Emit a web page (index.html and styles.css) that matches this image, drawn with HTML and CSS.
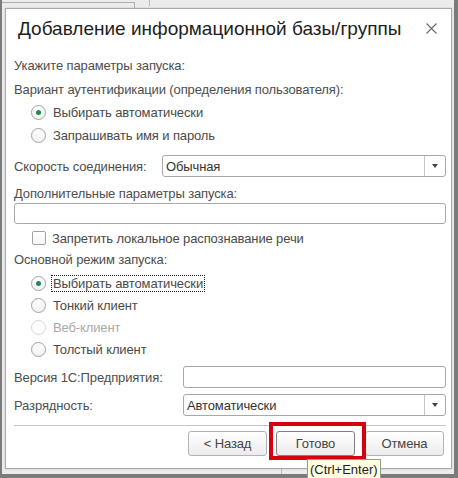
FILE: index.html
```html
<!DOCTYPE html>
<html lang="ru">
<head>
<meta charset="utf-8">
<title>Добавление информационной базы/группы</title>
<link rel="stylesheet" href="styles.css">
</head>
<body>
<div class="screen">
  <div class="desk">
    <div class="top-strip">
      <div class="pane pane-a"></div>
      <div class="pane pane-b"></div>
    </div>
    <div class="dialog">
      <div class="header">
        <div class="title">Добавление информационной базы/группы</div>
        <div class="close">
          <svg width="11" height="11" viewBox="0 0 11 11"><path d="M0.5 0.5 L10.5 10.5 M10.5 0.5 L0.5 10.5" stroke="#6a6a6a" stroke-width="1.1" fill="none"/></svg>
        </div>
      </div>
      <div class="body">
        <div class="label intro">Укажите параметры запуска:</div>
        <div class="label group">Вариант аутентификации (определения пользователя):</div>
        <div class="option opt-a"><span class="radio checked"></span><span class="opt-text">Выбирать автоматически</span></div>
        <div class="option opt-a"><span class="radio"></span><span class="opt-text">Запрашивать имя и пароль</span></div>

        <div class="field-row speed">
          <div class="field-label w148">Скорость соединения:</div>
          <div class="select">
            <span class="select-value">Обычная</span>
            <span class="select-btn"><span class="arrow"></span></span>
          </div>
        </div>

        <div class="label extra">Дополнительные параметры запуска:</div>
        <div class="input wide"></div>

        <div class="option check-row"><span class="checkbox"></span><span class="opt-text">Запретить локальное распознавание речи</span></div>

        <div class="label group2">Основной режим запуска:</div>
        <div class="option opt-b first"><span class="radio checked"></span><span class="opt-text focused">Выбирать автоматически</span></div>
        <div class="option opt-b"><span class="radio"></span><span class="opt-text">Тонкий клиент</span></div>
        <div class="option opt-b disabled"><span class="radio"></span><span class="opt-text">Веб-клиент</span></div>
        <div class="option opt-b"><span class="radio"></span><span class="opt-text">Толстый клиент</span></div>

        <div class="field-row version">
          <div class="field-label w169">Версия 1С:Предприятия:</div>
          <div class="input grow"></div>
        </div>
        <div class="field-row bits">
          <div class="field-label w169">Разрядность:</div>
          <div class="select">
            <span class="select-value">Автоматически</span>
            <span class="select-btn"><span class="arrow"></span></span>
          </div>
        </div>

        <div class="separator"></div>

        <div class="buttons">
          <button class="btn">&lt; Назад</button>
          <span class="highlight">
            <button class="btn default">Готово</button>
            <span class="tooltip">(Ctrl+Enter)</span>
          </span>
          <button class="btn">Отмена</button>
        </div>
      </div>
    </div>
    <div class="bottom-strip">
      <div class="pane pane-c"></div>
    </div>
  </div>
</div>
</body>
</html>
```

FILE: styles.css
```css
* { box-sizing: border-box; }

html, body {
  margin: 0;
  padding: 0;
  background: #7b7b7b;
}

.screen {
  width: 458px;
  height: 478px;
  overflow: hidden;
  background: #7b7b7b;
  padding: 0 4px 0 2px;
  font-family: "Liberation Sans", Arial, sans-serif;
  font-size: 13px;
  letter-spacing: -0.12px;
  color: #4d4d4d;
}

.desk {
  height: 474px;
  background: #ececec;
  display: flex;
  flex-direction: column;
}

.top-strip {
  height: 8px;
  display: flex;
  flex-shrink: 0;
}

.pane-a {
  width: 133px;
  margin-top: 2px;
  border-top: 1px solid #b0b0b0;
  border-right: 1px solid #b0b0b0;
  height: 6px;
}

.pane-b {
  width: 15px;
  border-right: 1px solid #b8b8b8;
  height: 6px;
}

.bottom-strip {
  height: 5px;
  display: flex;
  flex-shrink: 0;
}

.pane-c {
  width: 280px;
  border-right: 1px solid #b8b8b8;
  height: 5px;
}

.dialog {
  margin-left: 3px;
  width: 447px;
  height: 461px;
  flex-shrink: 0;
  background: #ffffff;
  border: 1px solid #a9a9a9;
  box-shadow: 0 0 2px rgba(0,0,0,0.15);
  position: relative;
}

.header {
  height: 40px;
  display: flex;
  align-items: center;
  justify-content: space-between;
  padding: 0 14px 0 12px;
}

.title {
  font-size: 19px;
  letter-spacing: 0;
  line-height: 40px;
  color: #1e1e1e;
  white-space: nowrap;
}

.close {
  width: 11px;
  height: 11px;
  margin-top: -1px;
  display: flex;
}

.body {
  padding: 0 5px 0 8px;
}

.label {
  height: 22px;
  line-height: 22px;
  white-space: nowrap;
}

.intro { margin-top: 6px; }
.group { margin-top: 2px; }

.option {
  display: flex;
  align-items: center;
  white-space: nowrap;
}

.opt-a {
  height: 23px;
  padding-left: 17px;
}

.opt-b {
  height: 22px;
  padding-left: 17px;
}

.opt-b.first { margin-top: 1px; }

.opt-text {
  margin-left: 7px;
  color: #4a4a4a;
  line-height: 15px;
}

.radio {
  width: 15px;
  height: 15px;
  border-radius: 50%;
  border: 1px solid #a2a2a2;
  background: linear-gradient(#ffffff, #f1f1f1);
  display: flex;
  align-items: center;
  justify-content: center;
  flex-shrink: 0;
}

.radio.checked::after {
  content: "";
  width: 5px;
  height: 5px;
  border-radius: 50%;
  background: #23895a;
}

.disabled .radio {
  border-color: #d6d6d6;
  background: #ffffff;
}

.disabled .opt-text {
  color: #a9a9a9;
}

.focused {
  outline: 1px dotted #222;
  outline-offset: 0;
  padding: 0 1px;
  margin-left: 6px;
}

.check-row {
  height: 22px;
  margin-top: 3px;
  padding-left: 18px;
}

.checkbox {
  width: 14px;
  height: 14px;
  border: 1px solid #a2a2a2;
  border-radius: 2px;
  background: linear-gradient(#ffffff, #f3f3f3);
  flex-shrink: 0;
}

.check-row .opt-text { margin-left: 6px; }

.group2 { height: 22px; line-height: 22px; }

.field-row {
  display: flex;
  align-items: center;
  height: 22px;
}

.speed { margin-top: 8px; }
.version { margin-top: 6px; }
.bits { margin-top: 6px; }

.field-label {
  flex-shrink: 0;
  white-space: nowrap;
}

.w148 { width: 148px; }
.w169 { width: 169px; }

.select {
  flex: 1;
  height: 22px;
  border: 1px solid #a8a8a8;
  border-radius: 3px;
  display: flex;
  align-items: center;
  background: #ffffff;
}

.select-value {
  flex: 1;
  padding-left: 3px;
  color: #333;
  white-space: nowrap;
}

.select-btn {
  width: 21px;
  height: 20px;
  border-left: 1px solid #c4c4c4;
  display: flex;
  align-items: center;
  justify-content: center;
}

.arrow {
  width: 0;
  height: 0;
  border-left: 3.5px solid transparent;
  border-right: 3.5px solid transparent;
  border-top: 4px solid #444;
}

.extra {
  margin-top: 8px;
  height: 18px;
  line-height: 18px;
}

.input {
  height: 21px;
  border: 1px solid #a8a8a8;
  border-radius: 3px;
  background: #ffffff;
}

.input.grow {
  flex: 1;
  height: 22px;
}

.separator {
  margin-top: 9px;
  height: 1px;
  background: #c6c6c6;
}

.buttons {
  margin-top: 5px;
  display: flex;
  justify-content: flex-end;
  padding-right: 2px;
  gap: 9px;
}

.btn {
  width: 79px;
  height: 25px;
  border: 1px solid #b3b3b3;
  border-radius: 3px;
  background: linear-gradient(#ffffff, #ececec);
  font-family: "Liberation Sans", Arial, sans-serif;
  font-size: 13px;
  letter-spacing: -0.12px;
  color: #444;
  padding: 0;
  margin: 0;
}

.btn.default {
  border-color: #808080;
}

.highlight {
  position: relative;
  display: flex;
  margin-right: 1px;
}

.highlight::after {
  content: "";
  position: absolute;
  left: -7px;
  right: -11px;
  top: -9px;
  bottom: -4px;
  border: 4px solid #d9000e;
  pointer-events: none;
}

.tooltip {
  position: absolute;
  left: 31px;
  top: 28px;
  height: 20px;
  padding: 1px 2px 0 2px;
  background: #ffffe1;
  border: 1px solid #9a9a80;
  font-size: 13px;
  letter-spacing: 0;
  line-height: 17px;
  color: #222;
  white-space: nowrap;
  z-index: 2;
}
```
